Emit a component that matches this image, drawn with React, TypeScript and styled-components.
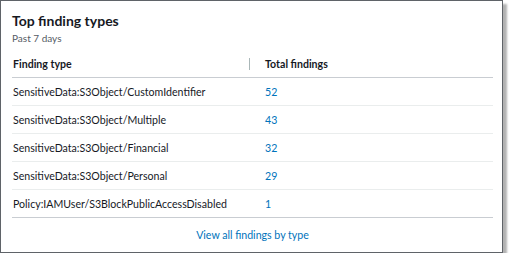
import React from 'react';
import styled, { createGlobalStyle } from 'styled-components';

const GlobalStyle = createGlobalStyle`
  html, body {
    margin: 0;
    padding: 0;
    background: #ffffff;
  }
  body {
    font-family: Lato, "Liberation Sans", sans-serif;
    color: #16191f;
  }
`;

const Card = styled.section`
  box-sizing: border-box;
  width: 503px;
  height: 253px;
  border: 1px solid #5f6368;
  background: #ffffff;
  box-shadow: 4px 4px 2px rgba(0, 0, 0, 0.3);
  display: flex;
  flex-direction: column;
  padding: 0 9px 0 11px;
`;

const Header = styled.header`
  padding-top: 11px;
`;

const Title = styled.h2`
  margin: 0;
  font-size: 14px;
  line-height: 17px;
  font-weight: 700;
`;

const Subtitle = styled.div`
  margin-top: 3px;
  font-size: 10px;
  line-height: 12px;
  color: #545b64;
`;

const Table = styled.div`
  margin-top: 6px;
  display: flex;
  flex-direction: column;
`;

const Row = styled.div<{ $head?: boolean; $last?: boolean }>`
  display: grid;
  grid-template-columns: 236px 1fr;
  align-items: center;
  height: 27px;
  border-bottom: 1px solid
    ${(p) => (p.$head || p.$last ? '#c9cdd2' : '#eaeded')};
  font-size: 10.6px;
  font-weight: ${(p) => (p.$head ? 700 : 400)};
`;

const Cell = styled.div<{ $divider?: boolean; $indent?: boolean }>`
  display: flex;
  align-items: center;
  padding-left: ${(p) => (p.$indent ? '17px' : '1px')};
  ${(p) =>
    p.$divider &&
    `
    &::before {
      content: '';
      width: 1px;
      height: 12px;
      background: #aab7b8;
      margin-right: 15px;
    }
  `}
`;

const Count = styled.a`
  color: #0073bb;
  text-decoration: none;
`;

const Footer = styled.footer`
  flex: 1;
  display: flex;
  align-items: center;
  justify-content: center;
  padding-bottom: 1px;
`;

const FooterLink = styled.a`
  color: #0073bb;
  font-size: 10.6px;
  text-decoration: none;
`;

const findings = [
  { type: 'SensitiveData:S3Object/CustomIdentifier', count: 52 },
  { type: 'SensitiveData:S3Object/Multiple', count: 43 },
  { type: 'SensitiveData:S3Object/Financial', count: 32 },
  { type: 'SensitiveData:S3Object/Personal', count: 29 },
  { type: 'Policy:IAMUser/S3BlockPublicAccessDisabled', count: 1 },
];

const App = () => {
  return (
    <>
      <GlobalStyle />
      <Card>
        <Header>
          <Title>Top finding types</Title>
          <Subtitle>Past 7 days</Subtitle>
        </Header>
        <Table>
          <Row $head>
            <Cell>Finding type</Cell>
            <Cell $divider>Total findings</Cell>
          </Row>
          {findings.map((f, i) => (
            <Row key={f.type} $last={i === findings.length - 1}>
              <Cell>{f.type}</Cell>
              <Cell $indent>
                <Count href="#">{f.count}</Count>
              </Cell>
            </Row>
          ))}
        </Table>
        <Footer>
          <FooterLink href="#">View all findings by type</FooterLink>
        </Footer>
      </Card>
    </>
  );
};

export default App;
